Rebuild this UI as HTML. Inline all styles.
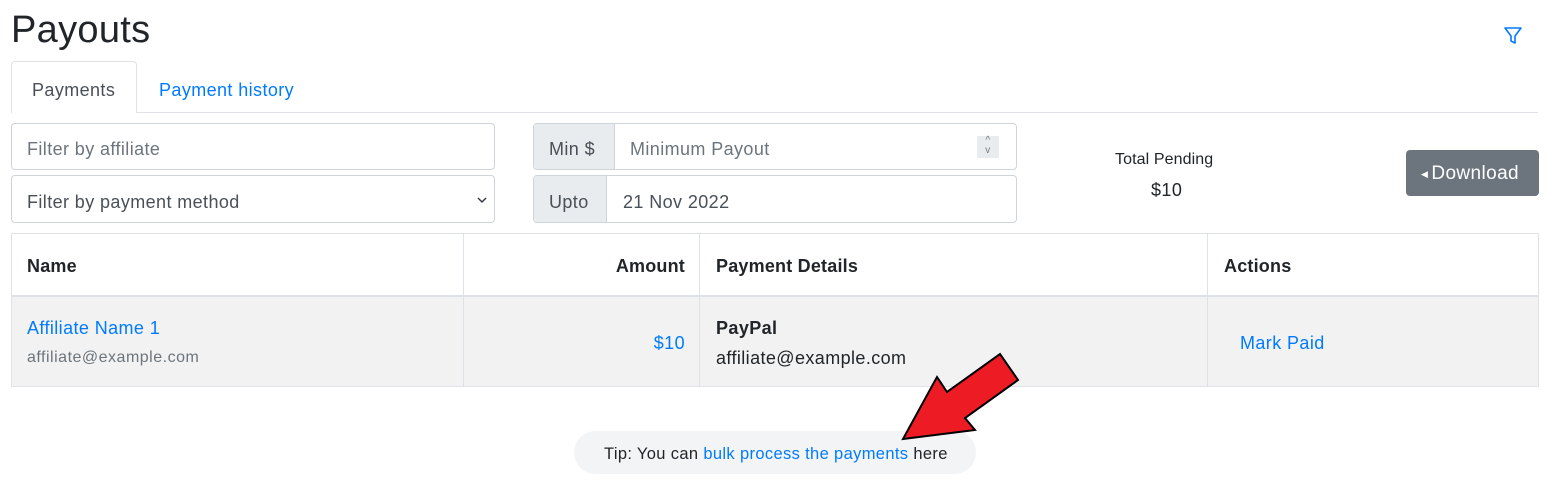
<!DOCTYPE html>
<html><head><style>
*{box-sizing:border-box;margin:0;padding:0}
body{width:1547px;height:482px;background:#fff;font-family:"Liberation Sans",sans-serif;color:#212529;position:relative;overflow:hidden;font-size:18px;letter-spacing:0.4px}
.a{position:absolute}
.box{border:1px solid #ced4da;border-radius:4px;background:#fff}
.ph{color:#6c757d}
.blue{color:#007bff}
</style></head><body>
<div class="a" style="left:11px;top:9px;font-size:38px;letter-spacing:0.3px">Payouts</div>
<svg class="a" style="left:1503px;top:26px" width="20" height="20" viewBox="0 0 20 20"><path d="M2 2h16l-6 8v7l-4-2v-5z" fill="none" stroke="#007bff" stroke-width="1.6" stroke-linejoin="round"/></svg>
<div class="a" style="left:11px;top:112px;width:1527px;height:1px;background:#dee2e6"></div>
<div class="a" style="left:11px;top:61px;width:126px;height:52px;border:1px solid #dee2e6;border-bottom:none;border-radius:4px 4px 0 0;background:#fff"></div>
<div class="a" style="left:32px;top:80px;color:#495057">Payments</div>
<div class="a blue" style="left:159px;top:80px">Payment history</div>
<div class="a box" style="left:11px;top:123px;width:484px;height:47px"></div>
<div class="a ph" style="left:27px;top:139px">Filter by affiliate</div>
<div class="a box" style="left:11px;top:175px;width:484px;height:48px"></div>
<div class="a" style="left:27px;top:192px;color:#495057">Filter by payment method</div>
<svg class="a" style="left:476px;top:195px" width="12" height="10"><path d="M2 3l4 4 4-4" fill="none" stroke="#343a40" stroke-width="1.5"/></svg>
<div class="a box" style="left:533px;top:123px;width:484px;height:47px"></div>
<div class="a" style="left:534px;top:124px;width:81px;height:45px;background:#e9ecef;border-right:1px solid #ced4da;border-radius:4px 0 0 4px"></div>
<div class="a" style="left:549px;top:139px;color:#495057">Min $</div>
<div class="a ph" style="left:630px;top:139px">Minimum Payout</div>
<div class="a" style="left:977px;top:136px;width:22px;height:22px;background:#e9ecef;font-size:10px;text-align:center;line-height:10px;color:#777">^<br>v</div>
<div class="a box" style="left:533px;top:175px;width:484px;height:48px"></div>
<div class="a" style="left:534px;top:176px;width:73px;height:46px;background:#e9ecef;border-right:1px solid #ced4da;border-radius:4px 0 0 4px"></div>
<div class="a" style="left:549px;top:192px;color:#495057">Upto</div>
<div class="a" style="left:623px;top:192px;color:#495057">21 Nov 2022</div>
<div class="a" style="left:1115px;top:151px;font-size:16px;letter-spacing:0.1px">Total Pending</div>
<div class="a" style="left:1151px;top:180px">$10</div>
<div class="a" style="left:1406px;top:150px;width:133px;height:46px;background:#6c757d;border-radius:4px;color:#fff;line-height:48px;padding-left:15px;font-size:19px"><span style="font-size:9px;vertical-align:2px;margin-right:3px">◀</span>Download</div>
<div class="a" style="left:11px;top:233px;width:1528px;height:154px;border:1px solid #dee2e6"></div>
<div class="a" style="left:12px;top:295px;width:1526px;height:91px;background:#f2f2f2;border-top:2px solid #dee2e6"></div>
<div class="a" style="left:463px;top:234px;width:1px;height:152px;background:#dee2e6"></div>
<div class="a" style="left:699px;top:234px;width:1px;height:152px;background:#dee2e6"></div>
<div class="a" style="left:1207px;top:234px;width:1px;height:152px;background:#dee2e6"></div>
<div class="a" style="left:27px;top:256px;font-weight:bold;letter-spacing:0.2px">Name</div>
<div class="a" style="left:464px;width:221px;text-align:right;top:256px;font-weight:bold;letter-spacing:0.2px">Amount</div>
<div class="a" style="left:716px;top:256px;font-weight:bold;letter-spacing:0.2px">Payment Details</div>
<div class="a" style="left:1224px;top:256px;font-weight:bold;letter-spacing:0.2px">Actions</div>
<div class="a blue" style="left:27px;top:318px">Affiliate Name 1</div>
<div class="a" style="left:27px;top:349px;font-size:16px;color:#6c757d;letter-spacing:0.5px">affiliate@example.com</div>
<div class="a blue" style="left:464px;width:221px;text-align:right;top:333px">$10</div>
<div class="a" style="left:716px;top:318px;font-weight:bold">PayPal</div>
<div class="a" style="left:716px;top:348px">affiliate@example.com</div>
<div class="a blue" style="left:1240px;top:333px">Mark Paid</div>
<div class="a" style="left:574px;top:431px;width:402px;height:43px;background:#f3f4f6;border-radius:22px"></div>
<div class="a" style="left:604px;top:445px;font-size:16.5px;letter-spacing:0.35px">Tip: You can <span class="blue">bulk process the payments</span> here</div>
<svg class="a" style="left:0;top:0" width="1547" height="482"><polygon points="903,439 937,377 947,392 1000,354 1018,380 965,418 975,430" fill="#ed1c24" stroke="#000" stroke-width="2" stroke-linejoin="miter"/></svg>
</body></html>
